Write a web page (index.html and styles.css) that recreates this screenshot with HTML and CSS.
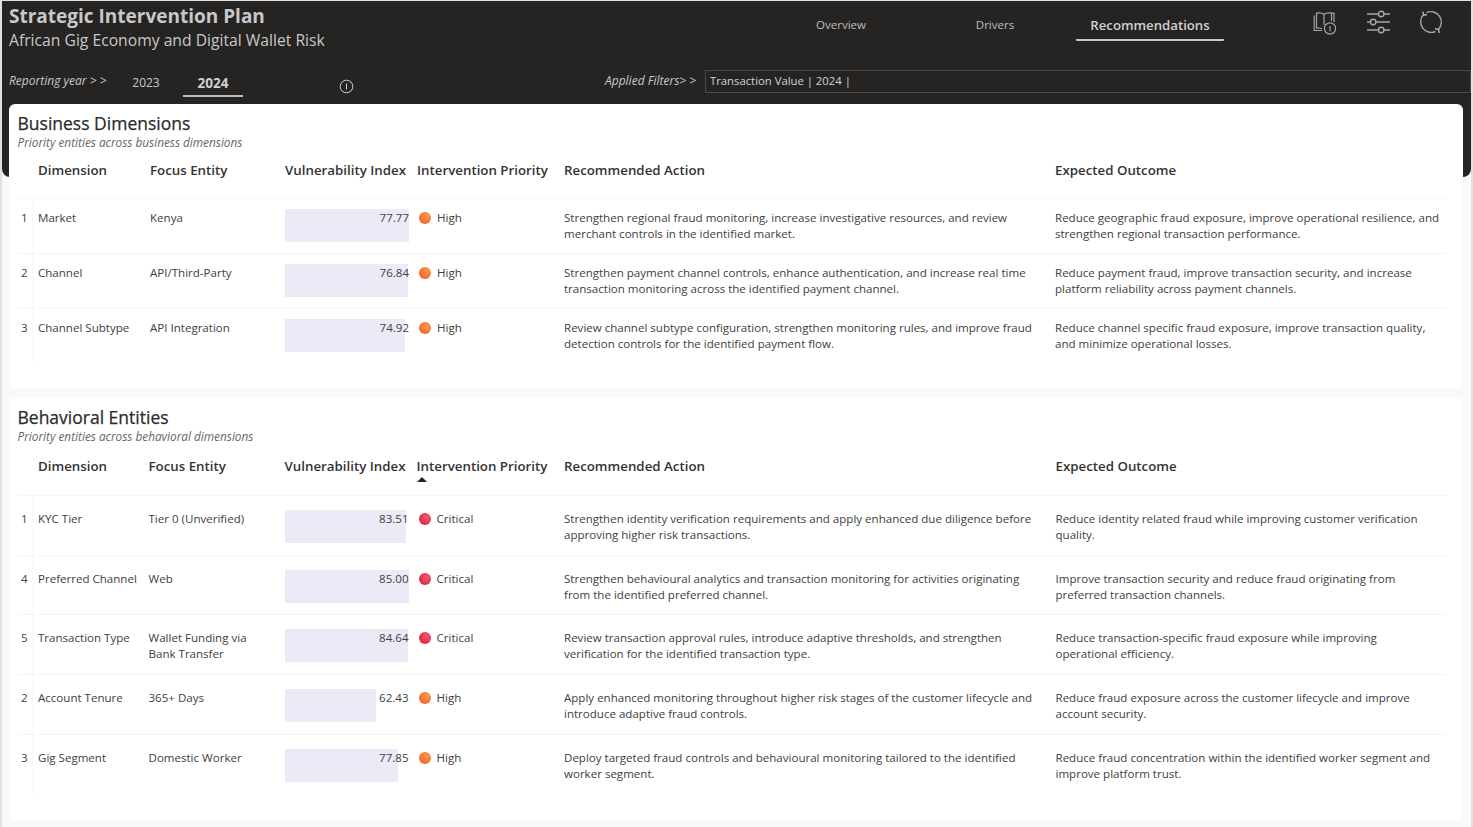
FILE: index.html
```html
<!DOCTYPE html>
<html lang="en">
<head>
    <meta charset="UTF-8">
    <meta name="viewport" content="width=device-width, initial-scale=1.0">
    <title>Strategic Intervention Plan</title>
    <link rel="stylesheet" href="styles.css">
</head>
<body>

    <header class="report-header">
        <div class="header-top">
            <div class="title-block">
                <h1>Strategic Intervention Plan</h1>
                <p>African Gig Economy and Digital Wallet Risk</p>
            </div>
            <nav class="page-nav">
                <a class="nav-overview">Overview</a>
                <a class="nav-drivers">Drivers</a>
                <a class="nav-recs active">Recommendations</a>
            </nav>
            <div class="header-icons">
                <svg width="26" height="26" viewBox="0 0 26 26" fill="none" stroke="#a6a6a6" stroke-width="1.2">
                    <path d="M13 5.5C11.5 3.8 8.5 3.6 5.5 4.2V19.2C7.8 18.8 9.6 18.9 11 19.8"/>
                    <path d="M13 5.5C14.5 3.8 18 3.6 23 4.2V13"/>
                    <path d="M13 5.5V16"/>
                    <path d="M3.2 6.5V21.5H11"/>
                    <path d="M20.5 4.2V12"/>
                    <circle cx="19" cy="19.5" r="5.6"/>
                    <path d="M19 17V22.2"/>
                </svg>
                <svg width="26" height="26" viewBox="0 0 26 26" fill="none" stroke="#a6a6a6" stroke-width="1.4">
                    <path d="M2 5H13.5M19 5H25"/>
                    <circle cx="16.2" cy="5" r="2.7"/>
                    <path d="M2 13H5.5M11 13H25"/>
                    <circle cx="8.2" cy="13" r="2.7"/>
                    <path d="M2 21H13.5M19 21H25"/>
                    <circle cx="16.2" cy="21" r="2.7"/>
                </svg>
                <svg width="26" height="26" viewBox="0 0 26 26" fill="none" stroke="#a6a6a6" stroke-width="1.4">
                    <path d="M8.6 3.5A10.5 10.5 0 0 1 20.4 20.4"/>
                    <path d="M17.4 22.5A10.5 10.5 0 0 1 5.6 5.6"/>
                    <path d="M4.8 2.6L5.6 6L9 5.6" stroke-width="1.6"/>
                    <path d="M17 19.8L20.6 20.4L21 24" stroke-width="1.6"/>
                </svg>
            </div>
        </div>
        <div class="header-filters">
            <span class="filter-label year-label">Reporting year &gt; &gt;</span>
            <span class="year">2023</span>
            <span class="year active">2024</span>
            <svg class="info-icon" width="15" height="15" viewBox="0 0 15 15" fill="none" stroke="#d0d0d0" stroke-width="1">
                <circle cx="7.5" cy="7.5" r="6.3"/>
                <path d="M7.5 4.5V10.5"/>
            </svg>
            <span class="filter-label applied-label">Applied Filters&gt; &gt;</span>
            <div class="filter-box">Transaction Value | 2024 |</div>
        </div>
    </header>

    <main class="cards">
        <section class="card card-business">
            <h2>Business Dimensions</h2>
            <p class="card-sub">Priority entities across business dimensions</p>
            <table class="plan-table">
                <colgroup>
                    <col class="col-idx"><col class="col-dim"><col class="col-focus"><col class="col-index"><col class="col-priority"><col class="col-action"><col>
                </colgroup>
                <thead>
                    <tr>
                        <th></th>
                        <th>Dimension</th>
                        <th>Focus Entity</th>
                        <th>Vulnerability Index</th>
                        <th>Intervention Priority</th>
                        <th>Recommended Action</th>
                        <th>Expected Outcome</th>
                    </tr>
                </thead>
                <tbody>
                    <tr>
                        <td class="idx">1</td>
                        <td>Market</td>
                        <td>Kenya</td>
                        <td><div class="bar-cell"><div class="bar" style="width: 100%"></div><span>77.77</span></div></td>
                        <td><span class="priority"><i class="dot high"></i>High</span></td>
                        <td>Strengthen regional fraud monitoring, increase investigative resources, and review merchant controls in the identified market.</td>
                        <td>Reduce geographic fraud exposure, improve operational resilience, and strengthen regional transaction performance.</td>
                    </tr>
                    <tr>
                        <td class="idx">2</td>
                        <td>Channel</td>
                        <td>API/Third-Party</td>
                        <td><div class="bar-cell"><div class="bar" style="width: 98.8%"></div><span>76.84</span></div></td>
                        <td><span class="priority"><i class="dot high"></i>High</span></td>
                        <td>Strengthen payment channel controls, enhance authentication, and increase real time transaction monitoring across the identified payment channel.</td>
                        <td>Reduce payment fraud, improve transaction security, and increase platform reliability across payment channels.</td>
                    </tr>
                    <tr>
                        <td class="idx">3</td>
                        <td>Channel Subtype</td>
                        <td>API Integration</td>
                        <td><div class="bar-cell"><div class="bar" style="width: 96.4%"></div><span>74.92</span></div></td>
                        <td><span class="priority"><i class="dot high"></i>High</span></td>
                        <td>Review channel subtype configuration, strengthen monitoring rules, and improve fraud detection controls for the identified payment flow.</td>
                        <td>Reduce channel specific fraud exposure, improve transaction quality, and minimize operational losses.</td>
                    </tr>
                </tbody>
            </table>
        </section>

        <section class="card card-behavior">
            <h2>Behavioral Entities</h2>
            <p class="card-sub">Priority entities across behavioral dimensions</p>
            <table class="plan-table">
                <colgroup>
                    <col class="col-idx"><col class="col-dim"><col class="col-focus"><col class="col-index"><col class="col-priority"><col class="col-action"><col>
                </colgroup>
                <thead>
                    <tr>
                        <th></th>
                        <th>Dimension</th>
                        <th>Focus Entity</th>
                        <th>Vulnerability Index</th>
                        <th class="sorted">Intervention Priority</th>
                        <th>Recommended Action</th>
                        <th>Expected Outcome</th>
                    </tr>
                </thead>
                <tbody>
                    <tr>
                        <td class="idx">1</td>
                        <td>KYC Tier</td>
                        <td>Tier 0 (Unverified)</td>
                        <td><div class="bar-cell"><div class="bar" style="width: 98.2%"></div><span>83.51</span></div></td>
                        <td><span class="priority"><i class="dot critical"></i>Critical</span></td>
                        <td>Strengthen identity verification requirements and apply enhanced due diligence before approving higher risk transactions.</td>
                        <td>Reduce identity related fraud while improving customer verification quality.</td>
                    </tr>
                    <tr>
                        <td class="idx">4</td>
                        <td>Preferred Channel</td>
                        <td>Web</td>
                        <td><div class="bar-cell"><div class="bar" style="width: 100%"></div><span>85.00</span></div></td>
                        <td><span class="priority"><i class="dot critical"></i>Critical</span></td>
                        <td>Strengthen behavioural analytics and transaction monitoring for activities originating from the identified preferred channel.</td>
                        <td>Improve transaction security and reduce fraud originating from preferred transaction channels.</td>
                    </tr>
                    <tr>
                        <td class="idx">5</td>
                        <td>Transaction Type</td>
                        <td>Wallet Funding via<br>Bank Transfer</td>
                        <td><div class="bar-cell"><div class="bar" style="width: 99.6%"></div><span>84.64</span></div></td>
                        <td><span class="priority"><i class="dot critical"></i>Critical</span></td>
                        <td>Review transaction approval rules, introduce adaptive thresholds, and strengthen verification for the identified transaction type.</td>
                        <td>Reduce transaction-specific fraud exposure while improving<br>operational efficiency.</td>
                    </tr>
                    <tr>
                        <td class="idx">2</td>
                        <td>Account Tenure</td>
                        <td>365+ Days</td>
                        <td><div class="bar-cell"><div class="bar" style="width: 73.4%"></div><span>62.43</span></div></td>
                        <td><span class="priority"><i class="dot high"></i>High</span></td>
                        <td>Apply enhanced monitoring throughout higher risk stages of the customer lifecycle and introduce adaptive fraud controls.</td>
                        <td>Reduce fraud exposure across the customer lifecycle and improve account security.</td>
                    </tr>
                    <tr>
                        <td class="idx">3</td>
                        <td>Gig Segment</td>
                        <td>Domestic Worker</td>
                        <td><div class="bar-cell"><div class="bar" style="width: 91.6%"></div><span>77.85</span></div></td>
                        <td><span class="priority"><i class="dot high"></i>High</span></td>
                        <td>Deploy targeted fraud controls and behavioural monitoring tailored to the identified worker segment.</td>
                        <td>Reduce fraud concentration within the identified worker segment and improve platform trust.</td>
                    </tr>
                </tbody>
            </table>
        </section>
    </main>

</body>
</html>
```

FILE: styles.css
```css
html, body {
    height: 100%;
    overflow: hidden;
}
body {
    font-family: "Open Sans", "Noto Sans", sans-serif;
    margin: 0;
    box-sizing: border-box;
    border-left: 2px solid #e1e1e1;
    border-right: 2px solid #e1e1e1;
    border-top: 1px solid #e1e1e1;
    background-color: #f9f9f9;
    color: #333;
    font-size: 11.55px;
}

/* Dark header */
.report-header {
    height: 176px;
    background-color: #252423;
    border-radius: 0 0 8px 8px;
    color: #d2d2d2;
}
.header-top {
    display: flex;
    height: 69px;
}
.title-block {
    width: 700px;
    padding: 3px 0 0 7px;
    flex-shrink: 0;
    box-sizing: border-box;
}
.title-block h1 {
    margin: 0;
    font-size: 19px;
    line-height: 25px;
    font-weight: 700;
    color: #c8c8c8;
}
.title-block p {
    margin: 0;
    font-size: 15.7px;
    line-height: 22px;
    color: #c8c8c8;
}
.page-nav {
    display: flex;
    width: 524px;
    padding-left: 64px;
    box-sizing: border-box;
}
.page-nav a {
    display: block;
    height: 38px;
    line-height: 48px;
    font-size: 11.5px;
    text-align: center;
    color: #bdbdbd;
}
.nav-overview { width: 150px; }
.nav-drivers { width: 158px; }
.nav-recs {
    width: 148px;
    margin-left: 2px;
}
.page-nav a.active {
    font-weight: 600;
    font-size: 13.2px;
    color: #d0d0d0;
    border-bottom: 2px solid #c8c8c8;
    border-radius: 1px;
}
.header-icons {
    display: flex;
    gap: 27.5px;
    padding: 8px 0 0 85px;
}
.header-filters {
    display: flex;
    align-items: flex-start;
    height: 24px;
}
.filter-label {
    font-style: italic;
    font-size: 12px;
    color: #c8c8c8;
    line-height: 22px;
}
.year-label {
    width: 114px;
    padding-left: 7px;
    box-sizing: border-box;
}
.year {
    width: 60px;
    margin-right: 7px;
    text-align: center;
    font-size: 12px;
    color: #c8c8c8;
    line-height: 26px;
    height: 25px;
}
.year.active {
    font-weight: 700;
    font-size: 13.5px;
    color: #d0d0d0;
    border-bottom: 2px solid #bdbdbd;
}
.info-icon {
    margin: 9px 0 0 89px;
}
.applied-label {
    margin-left: 251px;
    width: 100px;
    white-space: nowrap;
}
.filter-box {
    flex: 1;
    height: 21px;
    line-height: 20px;
    border: 1px solid #4a4a4a;
    padding-left: 4px;
    font-size: 11.3px;
    color: #d2d2d2;
}

/* Cards overlap the bottom of the header */
.cards {
    margin: -73px 8px 0 7px;
    display: flex;
    flex-direction: column;
    gap: 10px;
}
.card {
    background-color: #fff;
    border-radius: 6px;
    padding: 7px 16px 0 9px;
    box-sizing: border-box;
}
.card-business { height: 284px; }
.card-behavior { height: 422px; }
.card h2 {
    margin: 0 0 0 -0.5px;
    font-size: 17.5px;
    line-height: 24px;
    font-weight: 500;
    color: #2b2b2b;
    -webkit-text-stroke: 0.25px #2b2b2b;
}
.card-sub {
    margin: -1px 0 1px -0.5px;
    font-size: 11.8px;
    line-height: 16px;
    font-style: italic;
    color: #666;
}

/* Table */
.plan-table {
    width: 1429px;
    table-layout: fixed;
    border-collapse: collapse;
}
.col-idx { width: 15px; }
.col-dim { width: 112px; }
.col-focus { width: 135px; }
.col-index { width: 132px; }
.col-priority { width: 147px; }
.col-action { width: 491px; }
.card-behavior .col-dim { width: 110.5px; }
.card-behavior .col-focus { width: 136px; }
.card-behavior .col-priority { width: 147.5px; }
.card-behavior .col-action { width: 491.5px; }
.plan-table th {
    text-align: left;
    font-size: 13.3px;
    font-weight: 600;
    color: #333;
    padding: 10px 5px 0;
    height: 47px;
    box-sizing: border-box;
    vertical-align: top;
    line-height: 18px;
    white-space: nowrap;
    border-bottom: 1px solid #f6f6f6;
}
.card-behavior .plan-table th {
    padding-top: 12px;
    height: 50px;
}
th.sorted {
    position: relative;
}
th.sorted::after {
    content: "";
    position: absolute;
    left: 5px;
    top: 32px;
    border-left: 5px solid transparent;
    border-right: 5px solid transparent;
    border-bottom: 5px solid #252423;
}
.plan-table td {
    vertical-align: top;
    padding: 11px 5px 0;
    height: 55px;
    box-sizing: border-box;
    line-height: 16px;
    color: #404040;
    border-bottom: 1px solid #f5f5f5;
}
.card-behavior .plan-table td {
    padding-top: 15px;
    height: 60px;
}
.card-behavior .plan-table tr:nth-child(2) td {
    height: 59px;
}
.plan-table tr:last-child td {
    border-bottom: 0;
}
.plan-table td.idx {
    padding-left: 3px;
    padding-right: 0;
    box-shadow: inset -1px 0 0 #f9f9f9;
}
.bar-cell {
    position: relative;
    height: 33px;
    width: 124px;
    margin-top: -1px;
    padding-top: 1px;
    box-sizing: border-box;
    text-align: right;
}
.bar-cell span {
    position: relative;
}
.bar {
    position: absolute;
    left: 0;
    top: 0;
    bottom: 0;
    background-color: #eceaf7;
}
.priority {
    display: flex;
    align-items: center;
    height: 16px;
    padding-left: 2px;
}
.dot {
    width: 12px;
    height: 12px;
    border-radius: 50%;
    margin-right: 6px;
}
.dot.high {
    background: radial-gradient(circle at 65% 35%, #ff9a4d, #f4632f 75%);
}
.dot.critical {
    background: radial-gradient(circle at 65% 35%, #f4566a, #dc2845 75%);
}
```
